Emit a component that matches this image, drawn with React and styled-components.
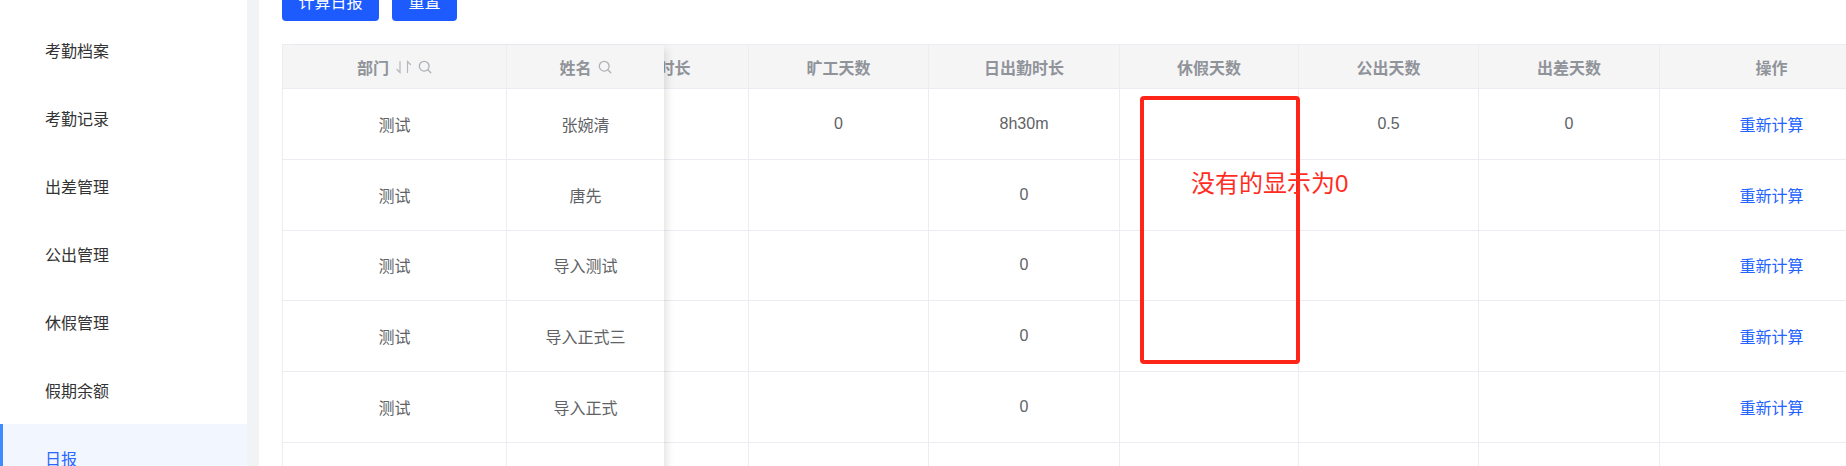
import React, { useLayoutEffect, useRef } from "react";
import styled, { createGlobalStyle } from "styled-components";

const GlobalStyle = createGlobalStyle`
  html, body {
    margin: 0;
    padding: 0;
    height: 100%;
    overflow: hidden;
  }
  body {
    background: #f2f3f5;
    font-family: "Liberation Sans", "Noto Sans CJK SC", sans-serif;
  }
`;

const Layout = styled.div`
  display: flex;
  height: 100vh;
  position: relative;
`;

const Sidebar = styled.nav`
  width: 247px;
  flex-shrink: 0;
  background: #fff;
  padding-top: 16px;
  box-sizing: border-box;
`;

const MenuItem = styled.div`
  height: 68px;
  display: flex;
  align-items: center;
  box-sizing: border-box;
  padding-left: ${(p) => (p.$active ? 42 : 45)}px;
  border-left: ${(p) => (p.$active ? "3px solid #3e8bff" : "none")};
  background: ${(p) => (p.$active ? "#f1f6ff" : "transparent")};
  color: ${(p) => (p.$active ? "#2b67ff" : "#333")};
  font-size: 16px;
`;

const Main = styled.main`
  flex: 1;
  min-width: 0;
  margin-left: 12px;
  background: #fff;
  height: 100vh;
  overflow: hidden;
`;

const MainInner = styled.div`
  padding: 16px 0 40px 23px;
`;

const Toolbar = styled.div`
  display: flex;
  gap: 13px;
`;

const Button = styled.button`
  height: 40px;
  padding: 0 16.5px;
  border: none;
  border-radius: 4px;
  background: #1d5bff;
  color: #fff;
  font-size: 16px;
  font-family: inherit;
  cursor: pointer;
`;

const Table = styled.div`
  margin-top: 23px;
  display: flex;
  border-top: 1px solid #ebedf2;
  border-left: 1px solid #ebedf2;
`;

const FixedPane = styled.div`
  flex-shrink: 0;
  position: relative;
  z-index: 1;
  background: #fff;
  box-shadow: 6px 0 9px -4px rgba(0, 0, 0, 0.13);
`;

const ScrollPane = styled.div`
  flex: 1;
  min-width: 0;
  overflow: hidden;
`;

const Track = styled.div`
  width: max-content;
`;

const Row = styled.div`
  display: flex;
  height: ${(p) => (p.$head ? "44px" : "70.8px")};
  box-sizing: border-box;
  border-bottom: 1px solid #ebedf2;
  background: ${(p) => (p.$head ? "#f5f5f6" : "#fff")};
`;

const Cell = styled.div`
  width: ${(p) => p.$w}px;
  flex-shrink: 0;
  box-sizing: border-box;
  border-right: ${(p) => (p.$open ? "none" : "1px solid #ebedf2")};
  display: flex;
  align-items: center;
  justify-content: center;
  font-size: 16px;
  color: #606266;
  white-space: nowrap;
`;

const HeadCell = styled(Cell)`
  color: #909399;
  font-weight: 600;
`;

const HeadIcons = styled.span`
  display: inline-flex;
  align-items: center;
  gap: 5px;
  margin-left: 6px;
`;

const Link = styled.a`
  color: #2262ff;
  cursor: pointer;
`;

const Annotation = styled.div`
  position: absolute;
  left: 1140px;
  top: 96px;
  width: 160px;
  height: 268px;
  box-sizing: border-box;
  border: 4px solid #ff2418;
  border-radius: 4px;
  pointer-events: none;
`;

const AnnotationText = styled.span`
  position: absolute;
  left: 47px;
  top: 70px;
  font-size: 24px;
  line-height: 28px;
  color: #ff2d1f;
  white-space: nowrap;
`;

const SortIcon = () => (
  <svg width="18" height="14" viewBox="0 0 18 14" fill="none" stroke="#b3b6bc" strokeWidth="1.2" strokeLinecap="round">
    <path d="M5 1.5V12.5L2 9.5" />
    <path d="M12.5 12.5V1.5L15.5 4.5" />
  </svg>
);

const SearchIcon = () => (
  <svg width="14" height="14" viewBox="0 0 14 14" fill="none" stroke="#aeb1b6" strokeWidth="1.3" strokeLinecap="round">
    <circle cx="6.2" cy="6.2" r="4.9" />
    <path d="M9.8 9.8L12.8 12.8" />
  </svg>
);

const fixedCols = [
  { key: "dept", title: "部门", w: 224, sort: true, search: true },
  { key: "name", title: "姓名", w: 157, search: true, open: true },
];

const scrollCols = [
  { key: "workTime", title: "出勤时长", w: 180 },
  { key: "absent", title: "旷工天数", w: 180 },
  { key: "dayTime", title: "日出勤时长", w: 191 },
  { key: "leave", title: "休假天数", w: 179 },
  { key: "out", title: "公出天数", w: 180 },
  { key: "trip", title: "出差天数", w: 181 },
  { key: "action", title: "操作", w: 224 },
];

const rows = [
  { dept: "测试", name: "张婉清", absent: "0", dayTime: "8h30m", out: "0.5", trip: "0", action: true },
  { dept: "测试", name: "唐先", dayTime: "0", action: true },
  { dept: "测试", name: "导入测试", dayTime: "0", action: true },
  { dept: "测试", name: "导入正式三", dayTime: "0", action: true },
  { dept: "测试", name: "导入正式", dayTime: "0", action: true },
  {},
  {},
  {},
];

const menu = ["考勤档案", "考勤记录", "出差管理", "公出管理", "休假管理", "假期余额", "日报"];

const renderValue = (col, row) => {
  if (col.key === "action") return row.action ? <Link>重新计算</Link> : null;
  return row[col.key] ?? "";
};

const App = () => {
  const mainRef = useRef(null);
  const scrollRef = useRef(null);

  useLayoutEffect(() => {
    if (mainRef.current) mainRef.current.scrollTop = 35;
    if (scrollRef.current) scrollRef.current.scrollLeft = 95;
  }, []);

  return (
    <>
      <GlobalStyle />
      <Layout>
        <Sidebar>
          {menu.map((m) => (
            <MenuItem key={m} $active={m === "日报"}>
              {m}
            </MenuItem>
          ))}
        </Sidebar>

        <Main ref={mainRef}>
          <MainInner>
            <Toolbar>
              <Button>计算日报</Button>
              <Button>重置</Button>
            </Toolbar>

            <Table>
              <FixedPane>
                <Row $head>
                  {fixedCols.map((c) => (
                    <HeadCell key={c.key} $w={c.w} $open={c.open}>
                      {c.title}
                      <HeadIcons>
                        {c.sort && <SortIcon />}
                        {c.search && <SearchIcon />}
                      </HeadIcons>
                    </HeadCell>
                  ))}
                </Row>
                {rows.map((r, i) => (
                  <Row key={i}>
                    {fixedCols.map((c) => (
                      <Cell key={c.key} $w={c.w} $open={c.open}>
                        {r[c.key] ?? ""}
                      </Cell>
                    ))}
                  </Row>
                ))}
              </FixedPane>

              <ScrollPane ref={scrollRef}>
                <Track>
                  <Row $head>
                    {scrollCols.map((c) => (
                      <HeadCell key={c.key} $w={c.w}>
                        {c.title}
                      </HeadCell>
                    ))}
                  </Row>
                  {rows.map((r, i) => (
                    <Row key={i}>
                      {scrollCols.map((c) => (
                        <Cell key={c.key} $w={c.w}>
                          {renderValue(c, r)}
                        </Cell>
                      ))}
                    </Row>
                  ))}
                </Track>
              </ScrollPane>
            </Table>
          </MainInner>
        </Main>

        <Annotation>
          <AnnotationText>没有的显示为0</AnnotationText>
        </Annotation>
      </Layout>
    </>
  );
};

export default App;
